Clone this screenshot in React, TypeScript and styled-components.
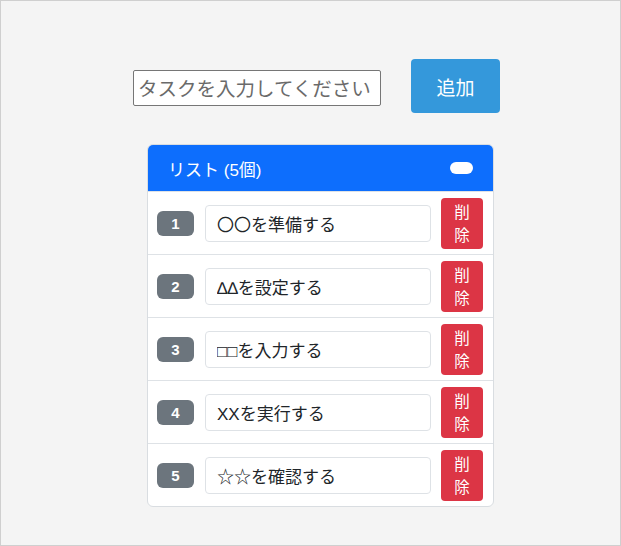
import React from "react";
import styled, { createGlobalStyle } from "styled-components";

const Global = createGlobalStyle`
  html, body { margin: 0; padding: 0; background: #f4f4f4; }
  * { box-sizing: border-box; }
`;

const Page = styled.div`
  width: 621px;
  height: 546px;
  border: 1px solid #cfcfcf;
  background: #f4f4f4;
  font-family: "Liberation Sans", "Noto Sans CJK JP", sans-serif;
  padding-top: 58px;
`;

const Form = styled.div`
  display: flex;
  align-items: center;
  gap: 30px;
  padding-left: 132px;
`;

const TaskInput = styled.input`
  width: 248px;
  height: 36px;
  border: 1px solid #767676;
  border-radius: 2px;
  background: #fff;
  font-family: "Noto Sans CJK JP", sans-serif;
  font-size: 19.5px;
  padding: 0 4px;
  color: #222;
  margin-top: 3px;
  &::placeholder { color: #6a6a6a; }
`;

const AddButton = styled.button`
  width: 89px;
  height: 54px;
  border: none;
  border-radius: 4px;
  background: #3498db;
  color: #fff;
  font-family: "Noto Sans CJK JP", sans-serif;
  font-size: 19px;
`;

const Card = styled.div`
  width: 347px;
  margin: 31px 0 0 146px;
  border: 1px solid #d9dde1;
  border-radius: 6px;
  background: #fff;
  overflow: hidden;
`;

const Header = styled.div`
  height: 46px;
  background: #0d6efd;
  color: #fff;
  display: flex;
  align-items: center;
  justify-content: space-between;
  padding: 0 20px 0 20px;
  font-size: 17px;
`;

const Pill = styled.span`
  width: 23px;
  height: 12px;
  border-radius: 6px;
  background: #fff;
`;

const Row = styled.div`
  height: 63px;
  display: flex;
  align-items: center;
  padding: 0 10px 0 9px;
  border-top: 1px solid #dee2e6;
`;

const Num = styled.span`
  width: 37px;
  height: 25px;
  border-radius: 6px;
  background: #6c757d;
  color: #fff;
  font-weight: 700;
  font-size: 15px;
  display: flex;
  align-items: center;
  justify-content: center;
  margin-right: 11px;
  margin-top: 1px;
`;

const ItemInput = styled.input`
  width: 226px;
  height: 37px;
  border: 1px solid #dee2e6;
  border-radius: 4px;
  font-family: "Liberation Sans", "Noto Sans CJK JP", sans-serif;
  font-size: 17px;
  color: #212529;
  padding: 0 11px;
  margin-right: 10px;
  margin-top: 1px;
`;

const DeleteButton = styled.button`
  width: 42px;
  height: 51px;
  border: none;
  border-radius: 4px;
  background: #dc3545;
  color: #fff;
  font-family: "Noto Sans CJK JP", sans-serif;
  font-size: 15.5px;
  line-height: 23px;
  padding: 0 6px;
`;

const tasks = ["〇〇を準備する", "∆∆を設定する", "□□を入力する", "XXを実行する", "☆☆を確認する"];

export default function App() {
  return (
    <>
      <Global />
      <Page>
        <Form>
          <TaskInput placeholder="タスクを入力してください" />
          <AddButton>追加</AddButton>
        </Form>
        <Card>
          <Header>
            <span>リスト (5個)</span>
            <Pill />
          </Header>
          {tasks.map((t, i) => (
            <Row key={i}>
              <Num>{i + 1}</Num>
              <ItemInput defaultValue={t} />
              <DeleteButton>削除</DeleteButton>
            </Row>
          ))}
        </Card>
      </Page>
    </>
  );
}
